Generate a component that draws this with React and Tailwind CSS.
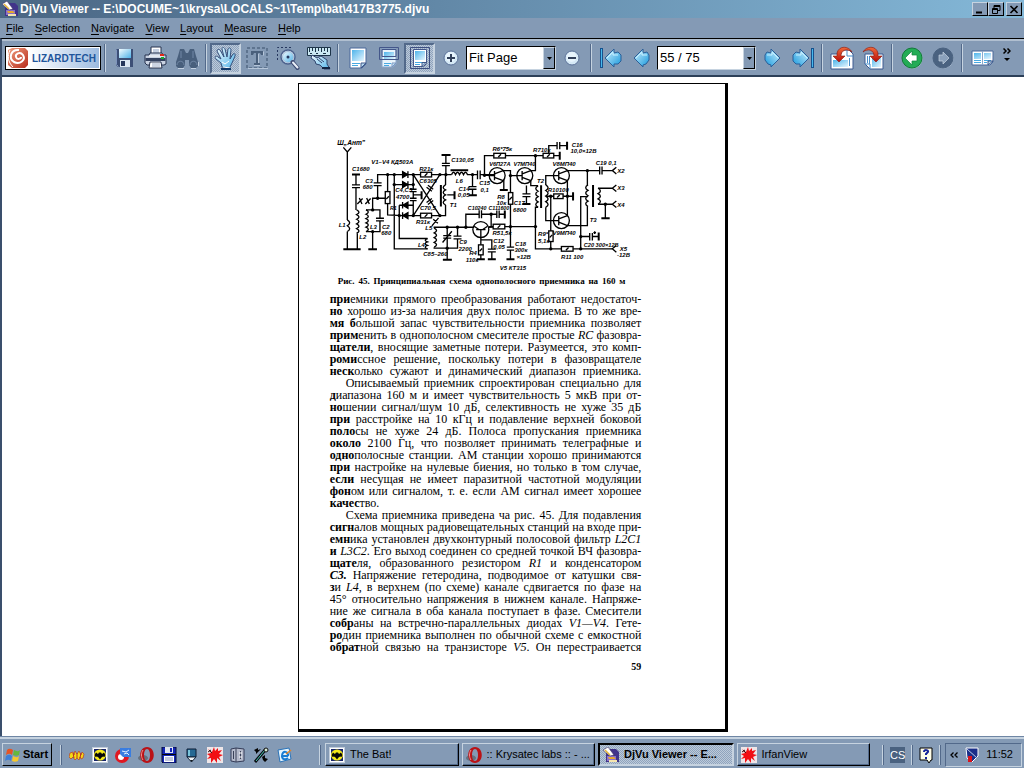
import React from 'react';

const ui = 'font-["Liberation_Sans",Arial,sans-serif]';

function Svg({ s = 24, children, className = 'h-6 w-6' }) {
  return (
    <svg viewBox={`0 0 ${s} ${s}`} className={`${className} block shrink-0`} aria-hidden="true">
      {children}
    </svg>
  );
}

/* ---------- toolbar drawings (24 x 24) ---------- */

const Defs = () => (
  <svg width="0" height="0" className="absolute" aria-hidden="true">
    <defs>
      <linearGradient id="blue" x1="0" y1="0" x2="1" y2="1">
        <stop offset="0" stopColor="#f4fcff" />
        <stop offset="1" stopColor="#4fb2e8" />
      </linearGradient>
      <linearGradient id="sheet" x1="0" y1="0" x2="1" y2="1">
        <stop offset="0" stopColor="#4fb4ea" />
        <stop offset="1" stopColor="#e6f6ff" />
      </linearGradient>
      <linearGradient id="arrow" x1="0" y1="0" x2="1" y2="1">
        <stop offset="0" stopColor="#d6f4ff" />
        <stop offset="1" stopColor="#1296dc" />
      </linearGradient>
      <linearGradient id="swirl" x1="0" y1="0" x2="1" y2="1">
        <stop offset="0" stopColor="#f0a080" />
        <stop offset="1" stopColor="#b82c1c" />
      </linearGradient>
      <linearGradient id="red" x1="0" y1="0" x2="0" y2="1">
        <stop offset="0" stopColor="#f06a3c" />
        <stop offset="1" stopColor="#b80c08" />
      </linearGradient>
    </defs>
  </svg>
);

const Save = () => (
  <Svg>
    <path d="M3 3h17v18H5l-2-2z" fill="#3c4f76" />
    <path d="M6 3h12v9H6z" fill="url(#blue)" />
    <path d="M7 14h10v7H7z" fill="#dce8f4" />
    <path d="M8 15h4v5H8z" fill="#24365c" />
    <path d="M3.500 3.500v15l2 2" stroke="#7f95bd" fill="none" />
  </Svg>
);

const Printer = () => (
  <Svg>
    <path d="M7 1h10v9H7z" fill="#fff" stroke="#26324e" />
    <path d="M9 4h6M9 6h6" stroke="#8aa0c4" />
    <path d="M1 9h4l1-2h12l1 2h3v9l-2 1H3l-2-2z" fill="#c8d2e2" stroke="#26324e" />
    <path d="M1.500 12h20v3h-20z" fill="#33415f" />
    <path d="M5 10h14" stroke="#fff" />
    <path d="M16 8h4v2h-4z" fill="#e02818" />
    <path d="M17 11h3v2h-3z" fill="#18a834" />
    <path d="M6 16h11l1 6H5z" fill="#fff" stroke="#26324e" />
    <path d="M8 18h8M8 20h8" stroke="#9aaac4" />
  </Svg>
);

const Binoculars = () => (
  <Svg>
    <path d="M5 3h4l2 4h2l2-4h4l2 7 2 6v4l-2 2h-5l-2-3v-5h-4v5l-2 3H3l-2-2v-4l2-6z" fill="#485f7c" />
    <path d="M2 19c0-5 7-5 7 0M15 19c0-5 7-5 7 0M6 5v7M18 5v7" stroke="#7188a6" fill="none" />
    <path d="M3 22.500h6M16 22.500h5M23.500 16v4" stroke="#c2d0e0" />
  </Svg>
);

const Hand = () => (
  <Svg>
    <path
      d="M8 21L7 17 2 13c-2-2 0-4 2-2l3 2-4-8c0-2 2-2 3-1l4 7-2-8c0-2 2-2 3 0l2 8 1-8c1-2 3-1 3 1l-1 9 3-5c1-1 3 0 2 2l-3 7-2 4v2z"
      fill="url(#blue)"
      stroke="#35507c"
    />
    <path d="M8 16l3 2 4-3M9 21l7 1" stroke="#fff" fill="none" />
    <path d="M7 23h10" stroke="#123b6b" strokeWidth="2" />
  </Svg>
);

const TextSelect = () => (
  <Svg>
    <path d="M2 2h20v20H2z" fill="none" stroke="#516883" strokeWidth="1.500" strokeDasharray="3 2" />
    <path d="M6 5h12v4h-2l-1-2h-2v10h2v2H9v-2h2V7H9L8 9H6z" fill="#4a607c" />
    <path d="M18.500 5.500v4M13.500 8v9M9 19.500h6M3 22.500h20" stroke="#b5c5d8" fill="none" />
  </Svg>
);

const Magnifier = () => (
  <Svg>
    <path d="M1.500 14V1.500H15" fill="none" stroke="#26375e" strokeDasharray="2 2" />
    <circle cx="12" cy="11" r="7" fill="#e9f5fc" stroke="#4d628d" strokeWidth="1.500" />
    <circle cx="12" cy="11" r="5.500" fill="url(#blue)" stroke="#a6bdd6" />
    <circle cx="12" cy="11" r="1.500" fill="#26375e" />
    <path d="M16.500 16l5 6" stroke="#3c4a72" strokeWidth="4" strokeLinecap="round" />
    <path d="M17 16.500l4.500 5" stroke="#e9eff8" strokeWidth="2" strokeLinecap="round" />
  </Svg>
);

const MeasureIcon = () => (
  <Svg>
    <path d="M.5 1.500h23v8H.5z" fill="#cbe9f3" stroke="#1d3449" />
    <path d="M2.500 2v4M5.500 2v3M8.500 2v4M11.500 2v3M14.500 2v4M17.500 2v3M20.500 2v4M3 7.500h2M9 7.500h2M16 7.500h3" stroke="#1d3449" />
    <path d="M5 9l5 3 4-2 6 4v4l3 5h-6l-4-4-4-1-1-3-4-3z" fill="url(#blue)" stroke="#30466f" />
    <path d="M10 13l5 4M12 12l5 4" stroke="#30466f" />
    <path d="M15 22h8" stroke="#132544" strokeWidth="2" />
  </Svg>
);

const sheetPath = 'M4 2h16v16l-4 4H4z';
const PageIcon = () => (
  <Svg>
    <path d={sheetPath} fill="#fff" stroke="#4b689a" />
    <path d="M6 4h12v11H6z" fill="url(#sheet)" />
    <path d="M6 17.500h8M6 19.500h6" stroke="#48a9e2" />
    <path d="M15 22v-5h5z" fill="#b7dbf2" stroke="#3e5788" />
  </Svg>
);
const PageWidth = () => (
  <Svg>
    <path d="M5 3h14v15l-3 3H5z" fill="#e9f4fc" stroke="#8ba7cc" />
    <path d="M7 6h10v8H7z" fill="url(#sheet)" />
    <path d="M7 17.500h7M7 19.500h5" stroke="#48a9e2" />
    <path d="M2.500 1.500h19v12h-19zM5 3.500h14v7H5z" fill="none" stroke="#44578a" />
    <path d="M15 21v-4h4z" fill="#c1e0f4" stroke="#7c97c0" />
  </Svg>
);
const PageFit = () => (
  <Svg>
    <path d="M2.500 1.500h19v21h-19z" fill="none" stroke="#3c4e80" />
    <path d="M5.500 3.500h13v14l-3 3h-10z" fill="#fff" stroke="#44578a" />
    <path d="M7 5h10v9H7z" fill="url(#sheet)" />
    <path d="M7 16.500h7M7 18.500h5" stroke="#48a9e2" />
    <path d="M14 20.500v-4h4z" fill="#b7dbf2" stroke="#3e5788" />
  </Svg>
);

const Circle = ({ plus }) => (
  <Svg>
    <circle cx="12" cy="12" r="7" fill="#d5e9f6" stroke="#5c7299" />
    <circle cx="11.500" cy="11" r="5" fill="#eef8ff" opacity=".7" />
    <path d={plus ? 'M8 12h8M12 8v8' : 'M8 12h8'} stroke="#31405a" strokeWidth="2" />
  </Svg>
);

const Arrow = ({ flip, bar }) => (
  <Svg>
    <g transform={flip ? 'translate(24 0) scale(-1 1)' : undefined}>
      {bar && <path d="M2.500 2v20" stroke="#17518d" strokeWidth="3" />}
      {bar && <path d="M2.500 3v18" stroke="#47b9ee" />}
      <path d={bar ? 'M6 12l9-9v4l4-1 3 3v6l-3 3-4 0v3z' : 'M4 12l9-9v4l4-1 2 3v5l-3 4-3 1v2z'} fill="url(#arrow)" stroke="#2a5f98" />
      <path d={bar ? 'M8 12l6-6v3h5' : 'M6 12l6-6v3h5'} fill="none" stroke="#c8f0ff" />
    </g>
  </Svg>
);

const Rotate = ({ right }) => (
  <Svg>
    <path d={right ? 'M4 8h18v15H9l-5-5z' : 'M1 8h10V4h8l4 4v15H1z'} fill="#fff" stroke="#3d5a91" />
    <path d={right ? 'M11 10h9v11h-9z' : 'M3 14h15v7H3z'} fill="url(#sheet)" />
    <path d={right ? 'M6.500 10v7M8.500 10v8M4 18h5v5' : 'M19.500 12v8M17 4v6h6'} fill="none" stroke="#4a8fca" />
    <g transform={right ? 'translate(24 0) scale(-1 1)' : undefined}>
      <path d="M22 6C19 0 9-1 7 7v3H3l6 6 6-6h-4C11 4 17 2 22 6z" fill="url(#red)" stroke="#831710" strokeWidth=".6" />
    </g>
  </Svg>
);

const RoundArrow = ({ back }) => (
  <Svg>
    <circle cx="12.500" cy="12.500" r="10" fill={back ? '#a6e8bd' : '#b8c8da'} />
    <circle cx="12" cy="12" r="10" fill={back ? '#24ac56' : '#4a6280'} stroke={back ? '#12783a' : '#4a6280'} />
    <path
      d={back ? 'M5 12l7-7v4h5v6h-5v4z' : 'M18 12l-6-6v3H8v6h4v3z'}
      fill={back ? '#fff' : '#8ba1bb'}
      stroke={back ? '#10843e' : '#c5d2e1'}
      strokeWidth=".7"
    />
  </Svg>
);

const TwoPages = () => (
  <Svg>
    <path d="M2 5h21v11l-3 3H2z" fill="#fff" stroke="#4b689a" />
    <path d="M4 7h7v6H4zM14 7h7v6h-7z" fill="url(#sheet)" />
    <path d="M4 14.500h7M4 16.500h7M14 14.500h7M14 16.500h3" stroke="#48a9e2" />
    <path d="M12.500 5v14" stroke="#8da9cc" />
    <path d="M18 19v-4h5z" fill="#b7dbf2" stroke="#3e5788" />
  </Svg>
);

/* ---------- 16 x 16 drawings ---------- */

const DjVuIcon = () => (
  <Svg s={16} className="h-4 w-4">
    <path d="M3 2h10l3 3v10H3z" fill="#41348a" />
    <path d="M4 9h9v5H4z" fill="#8a70c8" />
    <path d="M0 3l5-3 6 8-4 1z" fill="#fff" stroke="#3a2f63" strokeWidth=".6" />
    <path d="M2 3l5 5" stroke="#e5b73a" strokeWidth="1.500" />
    <path d="M5 10h6l2 2H6z" fill="#e6a92c" />
    <path d="M6 13h8v2H6z" fill="#f5e5ae" />
  </Svg>
);
const BatIcon = () => (
  <Svg s={16} className="h-4 w-4">
    <path d="M0 0h16v16H0z" fill="#fff" />
    <path d="M.5 .5h15v15H.5z" fill="none" stroke="#849ab5" strokeDasharray="1 1" />
    <path d="M2 2h12v12H2z" fill="#16246a" />
    <ellipse cx="8" cy="8" rx="6" ry="5.500" fill="#f5ea18" />
    <path d="M2.500 8l1.500-2.500 2 1.500 1-1.500h2l1 1.500 2-1.500L13.500 8l-1 2-1.500-.5-1.500 1L8 12.500 6.500 10.500 5 9.500 3.500 10z" fill="#080808" />
  </Svg>
);
const OperaIcon = () => (
  <Svg s={16} className="h-4 w-4">
    <ellipse cx="5" cy="11" rx="5" ry="3" fill="#65717f" />
    <path fillRule="evenodd" d="M9 0c9 0 9 16 0 16S0 0 9 0zm0 2c-4 0-4 12 0 12s4-12 0-12z" fill="#ba1216" />
    <path d="M5 3c-2 3-2 7 0 10" stroke="#f39190" fill="none" />
  </Svg>
);
const SplatIcon = () => (
  <Svg s={16} className="h-4 w-4">
    <path d="M0 0h16v16H0z" fill="#eee6e8" />
    <path d="M7 0l1 4 3-3v3l4-1-3 4 4 1-4 2 2 4-4-3v5l-3-4-3 4V11l-4 1 3-3-3-2 4-1-3-4 4 3z" fill="#f20e14" />
    <path d="M1 5l3-2M2 3l3 3" stroke="#38161a" />
  </Svg>
);
const StartFlag = () => (
  <Svg s={16} className="h-4 w-4">
    <path d="M2 3c2-2 4-1 6 0L7 8C5 6 3 7 1 8z" fill="#e65424" />
    <path d="M9 3c2 1 4 2 6 0l-1 5c-2 1-4 1-6 0z" fill="#65b83c" />
    <path d="M1 9c2-1 4-2 6 0l-1 5c-2-2-4-1-6 0z" fill="#3d7fd8" />
    <path d="M8 9c2 1 4 2 6 0l-1 5c-2 1-4 1-6 0z" fill="#f6c82c" />
  </Svg>
);

const quick = [
  ['Bats', <Svg s={16} className="h-4 w-4"><path d="M1 6l3-1 1 3 1-4 2 3 2-3 2 4 1-3 2 2-1 4-2 1-1-2-1 3-2-2-2 2-2-3-2 2-2-2z" fill="#f4da16" stroke="#b8382a" strokeWidth=".7" /><path d="M4 6l1 5M8 6v5M12 6l-1 5" stroke="#bb3022" fill="none" /></Svg>],
  ['The Bat!', <BatIcon />],
  ['Messenger', <Svg s={16} className="h-4 w-4"><circle cx="7" cy="9" r="7" fill="#e01822" /><circle cx="6" cy="10" r="3" fill="#fff" /><path d="M5 1h11v9H8L5 7z" fill="#3a7de0" /><path d="M7 4l4 1 3-2M9 7l3-1 2 2" stroke="#e3f1ff" fill="none" /></Svg>],
  ['Opera', <OperaIcon />],
  ['Commander', <Svg s={16} className="h-4 w-4"><path d="M1 0h14v16H2l-1-1z" fill="#1224b8" stroke="#050a34" /><path d="M4 0h8v6H4z" fill="#dfe5f0" /><path d="M9 1h2v4H9z" fill="#1224b8" /><path d="M3 9h10v6H3z" fill="#fff" /><path d="M4 11h8M4 13h8" stroke="#8390bb" /><path d="M1 7.500h14" stroke="#050505" /></Svg>],
  ['Editor', <Svg s={16} className="h-4 w-4"><path d="M3 2h9v8H3z" fill="#266994" stroke="#0c1c34" /><path d="M4 3h2v6H4z" fill="#79c3da" /><path d="M3 10h9l-4.500 5z" fill="#eff3f5" stroke="#16263c" /><path d="M6 13h3l-1.500 2z" fill="#101820" /></Svg>],
  ['IrfanView', <SplatIcon />],
  ['Control', <Svg s={16} className="h-4 w-4"><path d="M1 2l5-1 8 1v12l-8 1-5-1z" fill="#b4bacb" stroke="#343c58" /><path d="M6 1v14M3.500 4v8M10.500 4v8" stroke="#394158" /><path d="M9 6h3M9 10h3" stroke="#fff" /></Svg>],
  ['Winamp', <Svg s={16} className="h-4 w-4"><path d="M2 15L13 2" stroke="#080c10" strokeWidth="3" /><path d="M3 14L12 3" stroke="#48c6b4" /><path d="M1 3l4-2v2l3-1-5 5V5zM9 10l3-2v3l3 1-3 3-2-2z" fill="#050505" /><circle cx="13" cy="3" r="2" fill="#d8ecd6" stroke="#111" /></Svg>],
  ['Outlook', <Svg s={16} className="h-4 w-4"><path d="M2 3l11-2 2 11-11 3z" fill="#e3f4ff" stroke="#2972b8" /><path d="M12 9H6c0-6 7-5 6 0M6 9c0 4 4 4 6 2" fill="none" stroke="#1a7cd2" strokeWidth="2" /><path d="M10 7l5-4" stroke="#e88520" strokeWidth="1.500" /></Svg>],
];

/* ---------- toolbar parts ---------- */

const hatch = 'bg-[conic-gradient(#8fa3bd_25%,#bccad9_0_50%,#8fa3bd_0_75%,#bccad9_0)] bg-[length:2px_2px]';

function Tool({ label, pressed, children }) {
  return (
    <button
      type="button"
      aria-label={label}
      aria-pressed={pressed}
      className={`flex h-[31px] w-[31px] shrink-0 items-center justify-center ${
        pressed ? `${hatch} border-2 border-t-[#52698a] border-l-[#52698a] border-r-[#c6d3e0] border-b-[#c6d3e0]` : ''
      }`}
    >
      {children}
    </button>
  );
}

const Sep = () => (
  <span className="flex w-2 shrink-0 justify-center">
    <span className="h-7 w-0.5 border-l border-l-[#52698a] bg-[#c6d3e0]" />
  </span>
);

function Combo({ label, value, className }) {
  return (
    <label className={`relative h-6 shrink-0 border border-t-black border-l-black border-r-[#c6d3e0] border-b-[#c6d3e0] bg-white ${className}`}>
      <select aria-label={label} className="block h-full w-full appearance-none bg-transparent pl-0.5 pr-4 text-[13px] leading-5 text-black outline-none">
        <option>{value}</option>
      </select>
      <span className="pointer-events-none absolute inset-y-0 right-0 flex w-3 items-center justify-center border border-t-[#c6d3e0] border-l-[#c6d3e0] border-r-black border-b-black bg-[#849ab5]">
        <svg viewBox="0 0 5 3" className="h-[3px] w-[5px]"><path d="M0 0h5L2.500 3z" /></svg>
      </span>
    </label>
  );
}

/* ---------- schematic ---------- */

const coilV = (x, y1, y2, n, side = 1) => {
  const h = (y2 - y1) / n;
  let d = `M${x} ${y1}`;
  for (let i = 0; i < n; i++) d += `q${side * 14} ${h / 2} 0 ${h}`;
  return d;
};

const T = ({ x, y, s = 18, children }) => (
  <text x={x} y={y} fontSize={s}>{children}</text>
);
const Dots = ({ at }) => at.map(([x, y]) => <circle key={`${x}-${y}`} cx={x} cy={y} r="5" fill="#000" stroke="none" />);
const Box = ({ x, y, w, h }) => (
  <g>
    <rect x={x} y={y} width={w} height={h} fill="#fff" />
    <path d={`M${x + w / 2 - 4} ${y + h / 2 + 4}l8-8`} />
  </g>
);
const Transistor = ({ cx, cy, down }) => (
  <g>
    <circle cx={cx} cy={cy} r="24" />
    {down ? (
      <path d={`M${cx - 14} ${cy}h28M${cx} ${cy}v24M${cx - 6} ${cy}l-14-10M${cx + 6} ${cy}l14-10`} />
    ) : (
      <path d={`M${cx - 24} ${cy}h16M${cx - 8} ${cy - 14}v28M${cx - 8} ${cy - 5}l26-10M${cx - 8} ${cy + 5}l26 10`} />
    )}
  </g>
);

function Schematic() {
  return (
    <svg viewBox="0 0 936 435" className="block w-full" role="img" aria-label="Принципиальная схема">
      <g fill="none" stroke="#000" strokeWidth="4">
        <path d="M52 66v204M40 52l12 14 12-14M52 305v53" />
        <path d={coilV(52, 270, 305, 2)} />
        <path d="M78 134v31M66 165h24M66 173h24M78 173v67M82 310v48" />
        <path d={coilV(80, 240, 310, 5)} />
        <path d={coilV(108, 240, 305, 5)} />
        <path d="M108 240h42v25M138 265h24M138 273h24M150 273v32h-42M128 305v53M128 240v-35h38M82 222l16-16M88 204l8 18M106 222l16-16M110 204l8 18" />
        <path d="M143 205v-38M131 167h24M131 159h24M143 159v-25h129M173 134v51M173 221v34l45 2M193 134v223h100M208 226v100h85M193 164h57M208 226h42M218 257h54" />
        <path d="M250 134v44M240 178h20M240 185h20M250 185v20M240 205h20M240 212h20M250 212v45M250 195h25M250 134l80 123M250 257l80-123" />
        <path d="M305 134h60M305 257h42v-32M347 165v-31M348 134v-27M336 107h24M336 100h24M348 100V75M352 195h22" />
        <path d="M294 166l16 12M290 172l16 12M294 224l16-12M290 218l16-12" />
        <path d={coilV(347, 165, 225, 4, -1)} />
        <path d="M365 134q6-14 12 0q6-14 12 0q6-14 12 0q6-14 12 0h30M428 134v36M416 170h24M416 178h24M428 178v18M443 122v26M451 122v26M451 134h45" />
        <path d={coilV(313, 295, 352, 4)} />
        <path d={coilV(293, 326, 357, 3, -1)} />
        <path d="M313 295v-3h120M313 352v3h70v-28M371 327h24M371 319h24M383 319v-27M352 292v25M340 317h24M340 325h24M352 325v65M338 338l28-34M306 288l20-24M310 268l14 12M408 292v-39h40M448 241v24M455 241v24M455 253h46" />
        <path d="M453 323v22M453 375v13M477 292l30-2M453 330h33v28M474 358h24M474 366h24M486 366v22" />
        <g strokeWidth="6">
          <path d="M40 358h26M66 134h24M66 358h26M115 358h26M335 75h27M362 121h53M333 165v65M374 184v24M275 184v24M417 196h24M339 390h27M441 388h24M474 388h24" />
        </g>
        <Transistor cx={453} cy={299} down />
        <Box x={166} y={185} w={14} h={36} />
        <Box x={272} y={127} w={33} h={14} />
        <Box x={272} y={250} w={33} h={14} />
        <Box x={446} y={345} w={14} h={30} />
        <g fill="#000">
          <path d="M218 125v18l15-9zM234 124v20M218 155v18l15-9zM234 154v20M234 217v18l-15-9zM218 216v20M234 248v18l-15-9zM218 247v20" />
        </g>
        <Dots at={[[173, 134], [193, 134], [193, 164], [208, 257], [143, 205], [128, 240], [128, 305], [250, 134], [250, 257], [250, 164], [330, 134], [330, 257], [348, 134], [428, 134], [352, 292], [383, 292], [352, 355], [408, 292]]} />
      </g>

      <g fill="none" stroke="#000" strokeWidth="4" transform="translate(450 0)">
        <path d="M14 136V77h28M14 136h18M77 77h113M222 77h18M207 70V47h25M232 36v22M240 36v22M240 47h22M70 122h22v66M70 152h2v28" />
        <path d="M92 137h22M92 223v129M81 352h22M81 361h22M92 361v27M153 122h14V77M153 152v15h22M140 167v25M128 192h24M128 200h24M140 200v22" />
        <path d={coilV(175, 168, 232, 4, -1)} />
        <path d={coilV(198, 165, 232, 4)} />
        <path d="M198 165v-28h24M198 232v40h24M200 199h22M250 199h30M213 199v104M213 335v22M175 232h-8v125h78M280 357h118" />
        <path d="M263 122h97M360 110v24M367 110v24M367 122h31M263 152v105M263 287h60v-57M323 122v43M303 357V200h22M303 320h27M330 309v23M338 309v23M338 320h19" />
        <path d={coilV(325, 165, 230, 4, -1)} />
        <path d={coilV(355, 175, 223, 3, 1)} />
        <path d="M355 175h43M355 223h43M377 223v42M410 112l-12 10 12 10M410 165l-12 10 12 10M410 213l-12 10 12 10M410 347l-12 10 12 10" />
        <path d="M28 290h12M75 290h92M34 290v-37M51 242v22M58 242v22M58 253h17M345 312v-8M341 308h8" />
        <g strokeWidth="6">
          <path d="M60 180h24M80 388h24M128 222h24M240 65v24M262 35v24M184 166v68M280 187v25M340 165v66M365 265h25M357 308v24M75 242v24" />
        </g>
        <Transistor cx={52} cy={137} />
        <Transistor cx={135} cy={137} />
        <Transistor cx={245} cy={137} />
        <Transistor cx={245} cy={272} />
        <Box x={42} y={70} w={35} h={14} />
        <Box x={190} y={70} w={32} h={14} />
        <Box x={86} y={188} w={13} h={35} />
        <Box x={222} y={192} w={28} h={14} />
        <Box x={207} y={303} w={13} h={32} />
        <Box x={245} y={350} w={35} h={14} />
        <Box x={40} y={283} w={35} h={14} />
        <Dots at={[[14, 136], [167, 77], [92, 137], [92, 290], [167, 290], [213, 199], [263, 199], [213, 357], [303, 357], [303, 320], [323, 122], [377, 223], [34, 253]]} />
      </g>

      <g fontFamily="'Liberation Sans', Arial, sans-serif" fontStyle="italic" fontWeight="bold" fill="#000">
        <T x={22} y={44} s={20}>Ш„Ант”</T>
        <T x={124} y={102}>V1–V4 КД503А</T>
        <T x={66} y={122}>C1680</T>
        <T x={106} y={160}>C3</T>
        <T x={98} y={178}>680</T>
        <T x={26} y={290}>L1</T>
        <T x={88} y={327}>L2</T>
        <T x={120} y={298}>L3</T>
        <T x={156} y={296}>C2</T>
        <T x={154} y={316}>680</T>
        <T x={180} y={240} s={16}>R1</T>
        <T x={196} y={186}>C4,C5</T>
        <T x={198} y={206}>4700</T>
        <T x={268} y={122}>R21к</T>
        <T x={268} y={160}>C6305</T>
        <T x={270} y={240}>C70,5</T>
        <T x={258} y={282}>R31к</T>
        <T x={364} y={95}>C130,05</T>
        <T x={378} y={158}>L6</T>
        <T x={386} y={182}>C14</T>
        <T x={384} y={202}>0,05</T>
        <T x={448} y={164}>C15</T>
        <T x={452} y={186}>0,1</T>
        <T x={360} y={231}>T1</T>
        <T x={286} y={300}>L5</T>
        <T x={264} y={350}>L4</T>
        <T x={280} y={379}>C85–260</T>
        <T x={388} y={342}>C9</T>
        <T x={386} y={362}>2200</T>
        <T x={414} y={240} s={16}>C10240</T>
        <T x={418} y={376}>R4</T>
        <T x={408} y={396}>110к</T>
        <T x={488} y={62}>R6*75к</T>
        <T x={478} y={108} s={17}>V6П27А</T>
        <T x={551} y={108} s={17}>V7МП40</T>
        <T x={610} y={66}>R710к</T>
        <T x={726} y={50}>C16</T>
        <T x={722} y={70}>10,0×12В</T>
        <T x={668} y={108}>V8МП40</T>
        <T x={798} y={104}>C19 0,1</T>
        <T x={863} y={128}>X2</T>
        <T x={863} y={180}>X3</T>
        <T x={863} y={230}>X4</T>
        <T x={622} y={160}>T2</T>
        <T x={502} y={206}>R8</T>
        <T x={500} y={226}>10к</T>
        <T x={552} y={226}>C17</T>
        <T x={550} y={246}>6800</T>
        <T x={654} y={186}>R10100</T>
        <T x={476} y={240} s={16}>C111600</T>
        <T x={780} y={276}>T3</T>
        <T x={668} y={314}>V9МП40</T>
        <T x={488} y={316}>R51,5к</T>
        <T x={625} y={318}>R9*</T>
        <T x={625} y={340}>5,1к</T>
        <T x={490} y={338}>C12</T>
        <T x={490} y={356}>0,05</T>
        <T x={556} y={348}>C18</T>
        <T x={554} y={366}>300к</T>
        <T x={560} y={386}>×12В</T>
        <T x={694} y={386}>R11 100</T>
        <T x={762} y={352} s={17}>C20 300×12В</T>
        <T x={870} y={364}>X5</T>
        <T x={862} y={382}>-12В</T>
        <T x={510} y={421}>V5 КТ315</T>
      </g>
    </svg>
  );
}

/* ---------- page text: [bold lead, rest]; _x_ marks italics ---------- */

const paragraphs = [
  {
    lines: [
      ['при', 'емники прямого преобразования работают недостаточ-'],
      ['но', ' хорошо из-за наличия двух полос приема. В то же вре-'],
      ['мя б', 'ольшой запас чувствительности приемника позволяет'],
      ['прим', 'енить в однополосном смесителе простые _RC_ фазовра-'],
      ['щатели', ', вносящие заметные потери. Разумеется, это комп-'],
      ['роми', 'ссное решение, поскольку потери в фазовращателе'],
      ['неск', 'олько сужают и динамический диапазон приемника.'],
    ],
  },
  {
    indent: true,
    lines: [
      ['', 'Описываемый приемник спроектирован специально для'],
      ['д', 'иапазона 160 м и имеет чувствительность 5 мкВ при от-'],
      ['но', 'шении сигнал/шум 10 дБ, селективность не хуже 35 дБ'],
      ['при', ' расстройке на 10 кГц и подавление верхней боковой'],
      ['поло', 'сы не хуже 24 дБ. Полоса пропускания приемника'],
      ['около', ' 2100 Гц, что позволяет принимать телеграфные и'],
      ['одно', 'полосные станции. АМ станции хорошо принимаются'],
      ['при', ' настройке на нулевые биения, но только в том случае,'],
      ['если', ' несущая не имеет паразитной частотной модуляции'],
      ['фон', 'ом или сигналом, т. е. если АМ сигнал имеет хорошее'],
      ['качес', 'тво.'],
    ],
    short: true,
  },
  {
    indent: true,
    lines: [
      ['', 'Схема приемника приведена ча рис. 45. Для подавления'],
      ['сигн', 'алов мощных радиовещательных станций на входе при-'],
      ['емн', 'ика установлен двухконтурный полосовой фильтр _L2C1_'],
      ['и', ' _L3C2_. Его выход соединен со средней точкой ВЧ фазовра-'],
      ['щате', 'ля, образованного резистором _R1_ и конденсатором'],
      [<i key="c3">C3.</i>, ' Напряжение гетеродина, подводимое от катушки свя-'],
      ['з', 'и _L4_, в верхнем (по схеме) канале сдвигается по фазе на'],
      ['', '45° относительно напряжения в нижнем канале. Напряже-'],
      ['', 'ние же сигнала в оба канала поступает в фазе. Смесители'],
      ['собр', 'аны на встречно-параллельных диодах _V1—V4_. Гете-'],
      ['ро', 'дин приемника выполнен по обычной схеме с емкостной'],
      ['обрат', 'ной связью на транзисторе _V5_. Он перестраивается'],
    ],
  },
];

const italics = (text) => text.split('_').map((part, i) => (i % 2 ? <i key={i}>{part}</i> : part));

function Paragraph({ lines, indent, short }) {
  return (
    <p>
      {lines.map(([lead, rest], i) => (
        <span
          key={i}
          className={`block whitespace-nowrap text-justify ${
            short && i === lines.length - 1 ? '' : '[text-align-last:justify]'
          } ${indent && i === 0 ? 'pl-4' : ''}`}
        >
          <b>{lead}</b>
          {italics(rest)}
        </span>
      ))}
    </p>
  );
}

/* ---------- window ---------- */

const menus = ['File', 'Selection', 'Navigate', 'View', 'Layout', 'Measure', 'Help'];
const raised = 'border border-t-[#c6d3e0] border-l-[#c6d3e0] border-r-black border-b-black';

function CapButton({ label, children }) {
  return (
    <button type="button" aria-label={label} className={`flex h-[14px] w-4 items-center justify-center bg-[#849ab5] ${raised}`}>
      <svg viewBox="0 0 10 9" className="h-[9px] w-[10px]" fill="none" stroke="#000">{children}</svg>
    </button>
  );
}

function Task({ icon, label, active }) {
  return (
    <button
      type="button"
      className={`flex h-[23px] min-w-0 flex-1 items-center gap-[5px] px-[3px] ${
        active
          ? `${hatch} border-2 border-t-black border-l-black border-r-[#c6d3e0] border-b-[#c6d3e0] font-bold`
          : `border border-t-[#c6d3e0] border-l-[#c6d3e0] border-r-black border-b-black shadow-[inset_-1px_-1px_0_#52698a]`
      }`}
    >
      {icon}
      <span className="whitespace-nowrap">{label}</span>
    </button>
  );
}

const BarSep = () => <span className="h-5 w-0.5 shrink-0 border-l border-l-[#c6d3e0] bg-[#52698a]" />;

export default function App() {
  return (
    <div className={`flex h-screen flex-col overflow-hidden bg-[#849ab5] text-[11px] text-black ${ui}`}>
      <Defs />
      <header className="flex h-[18px] shrink-0 items-center gap-0.5 bg-linear-to-r from-[#4a6684] to-[#84b8d8] pl-0.5 pr-0.5 text-white">
        <DjVuIcon />
        <h1 className="flex-1 truncate text-[12px] font-bold leading-4">
          DjVu Viewer -- E:\DOCUME~1\krysa\LOCALS~1\Temp\bat\417B3775.djvu
        </h1>
        <div className="flex">
          <CapButton label="Minimize"><path d="M1 7.500h6" strokeWidth="2" /></CapButton>
          <CapButton label="Restore"><path d="M3 .5h6v5H7M3 1.500h6M3 .5v3M1 4.500h6M1.500 3.500h5v5h-5z" /></CapButton>
          <span className="w-0.5" />
          <CapButton label="Close"><path d="M1.500 1l7 7M8.500 1l-7 7" strokeWidth="1.600" /></CapButton>
        </div>
      </header>

      <nav className="flex h-5 shrink-0 items-center gap-[11px] pl-1.5">
        {menus.map((m) => (
          <button type="button" key={m}><u className="underline-offset-2">{m[0]}</u>{m.slice(1)}</button>
        ))}
      </nav>

      <div className="flex min-h-0 flex-1 flex-col border-t border-l-2 border-t-black border-l-[#3a4f6c]">
        <div className="flex h-[38px] shrink-0 items-center border-t-2 border-b-2 border-t-[#b0bfd0] border-b-[#2c3f58] pl-[3px]">
          <button type="button" aria-label="LizardTech" className="flex h-6 w-24 shrink-0 items-center gap-0.5 border border-black bg-white pl-px">
            <svg viewBox="0 0 22 22" className="h-[22px] w-[22px] shrink-0" aria-hidden="true">
              <path d="M1 3l4-2h13l3 3v14l-3 3H5l-4-3z" fill="url(#swirl)" />
              <path d="M12 3c-8-1-11 8-5 12 6 3 12-2 9-7-3-4-8-1-7 2 1 3 5 2 5 0" fill="none" stroke="#fff" strokeWidth="2" />
              <path d="M3 3c-3 6-2 12 3 17" fill="none" stroke="#fff" />
            </svg>
            <svg viewBox="0 0 68 20" className="h-5 w-[68px] shrink-0">
              <defs>
                <linearGradient id="logo"><stop stopColor="#fff" /><stop offset="1" stopColor="#9dbbe0" /></linearGradient>
              </defs>
              <path d="M0 0h68v20H0z" fill="url(#logo)" />
              <text x="1" y="14" fontFamily="'Liberation Sans', Arial, sans-serif" fontSize="10" fontWeight="700" fill="#1f559b">LIZARDTECH</text>
            </svg>
          </button>
          <Sep />
          <Tool label="Save"><Save /></Tool>
          <Tool label="Print"><Printer /></Tool>
          <Tool label="Find"><Binoculars /></Tool>
          <Sep />
          <Tool label="Pan" pressed><Hand /></Tool>
          <Tool label="Select text"><TextSelect /></Tool>
          <Tool label="Zoom area"><Magnifier /></Tool>
          <Tool label="Measure"><MeasureIcon /></Tool>
          <Sep />
          <Tool label="Actual size"><PageIcon /></Tool>
          <Tool label="Fit width"><PageWidth /></Tool>
          <Tool label="Fit page" pressed><PageFit /></Tool>
          <Tool label="Zoom in"><Circle plus /></Tool>
          <Combo label="Zoom" value="Fit Page" className="w-[90px]" />
          <Tool label="Zoom out"><Circle /></Tool>
          <Sep />
          <Tool label="First page"><Arrow bar /></Tool>
          <Tool label="Previous page"><Arrow /></Tool>
          <Combo label="Page" value="55 / 75" className="w-[99px]" />
          <Tool label="Next page"><Arrow flip /></Tool>
          <Tool label="Last page"><Arrow flip bar /></Tool>
          <Sep />
          <Tool label="Rotate left"><Rotate /></Tool>
          <Tool label="Rotate right"><Rotate right /></Tool>
          <Sep />
          <Tool label="Back"><RoundArrow back /></Tool>
          <Tool label="Forward"><RoundArrow /></Tool>
          <Sep />
          <Tool label="Two pages"><TwoPages /></Tool>
          <button type="button" aria-label="More" className="flex h-5 w-5 items-start justify-center">
            <svg viewBox="0 0 8 14" className="h-[14px] w-2">
              <path d="M.5 .5L3 3 .5 5.500M4.500 .5L7 3 4.500 5.500" fill="none" stroke="#000" strokeWidth="1.500" />
              <path d="M1 10h6l-3 3z" />
            </svg>
          </button>
        </div>

        <main className="flex min-h-0 flex-1 justify-center bg-white pt-1.5 pb-1">
          <article className="aspect-[430/648] h-full border border-r-[3px] border-b-[3px] border-black bg-white pl-[31px] pr-[84px] pt-[46px] font-['Liberation_Serif','Times_New_Roman',serif]">
            <Schematic />
            <p className="whitespace-nowrap pl-2 pr-4 text-justify text-[9px] font-bold leading-3 [text-align-last:justify]">
              Рис. 45. Принципиальная схема однополосного приемника на 160 м
            </p>
            <div className="mt-1.5 text-[12px] leading-3">
              {paragraphs.map((p, i) => <Paragraph key={i} {...p} />)}
            </div>
            <p className="mt-2 text-right text-[10px] font-bold leading-3">59</p>
          </article>
        </main>
      </div>

      <footer className="flex h-8 shrink-0 items-center border-t border-t-[#6f86a4] shadow-[inset_0_2px_0_#c6d3e0] pl-0.5 pr-0.5 pt-1">
        <button type="button" className={`flex h-[23px] w-[50px] shrink-0 items-center gap-0.5 pl-0.5 font-bold ${raised}`}>
          <StartFlag />
          Start
        </button>
        <span className="w-2 shrink-0" />
        <BarSep />
        <div className="flex shrink-0 gap-[7px] px-[7px]">
          {quick.map(([name, icon]) => <button type="button" key={name} aria-label={name}>{icon}</button>)}
        </div>
        <span className="w-5 shrink-0" />
        <BarSep />
        <div className="flex min-w-0 flex-1 gap-[3px] pl-1 pr-1.5">
          <Task icon={<BatIcon />} label="The Bat!" />
          <Task icon={<OperaIcon />} label=":: Krysatec labs :: - ..." />
          <Task icon={<DjVuIcon />} label="DjVu Viewer -- E..." active />
          <Task icon={<SplatIcon />} label="IrfanView" />
        </div>
        <div className="flex shrink-0 items-center pl-1.5">
          <BarSep />
          <span className="mx-1.5 bg-[#4a6280] leading-4 text-white">CS</span>
          <BarSep />
          <span className="px-[5px]">
            <Svg s={16} className="h-4 w-4">
              <path d="M2 1h12v12h-1l-2 3-2-3H2z" fill="#fffde8" stroke="#000" />
              <path d="M6 5c0-3 5-2 4 0l-2 2v1M8 10v2" fill="none" stroke="#16249a" strokeWidth="2" />
            </Svg>
          </span>
          <BarSep />
          <div className="ml-1 flex h-6 items-center gap-1.5 border border-t-[#52698a] border-l-[#52698a] border-r-[#c6d3e0] border-b-[#c6d3e0] px-1">
            <svg viewBox="0 0 8 6" className="h-1.5 w-2"><path d="M3.500 .5L1 3l2.500 2.500M7.500 .5L5 3l2.500 2.500" fill="none" stroke="#000" strokeWidth="1.300" /></svg>
            <Svg s={16} className="h-4 w-4">
              <path d="M2 1h12v8l-6 6-5-4z" fill="#1a2e88" stroke="#fff" />
              <path d="M3 2l10 9" stroke="#b8d0ea" />
              <path d="M4 9h4v6H4z" fill="#d8141c" />
            </Svg>
            <time className="pr-1">11:52</time>
          </div>
        </div>
      </footer>
    </div>
  );
}
